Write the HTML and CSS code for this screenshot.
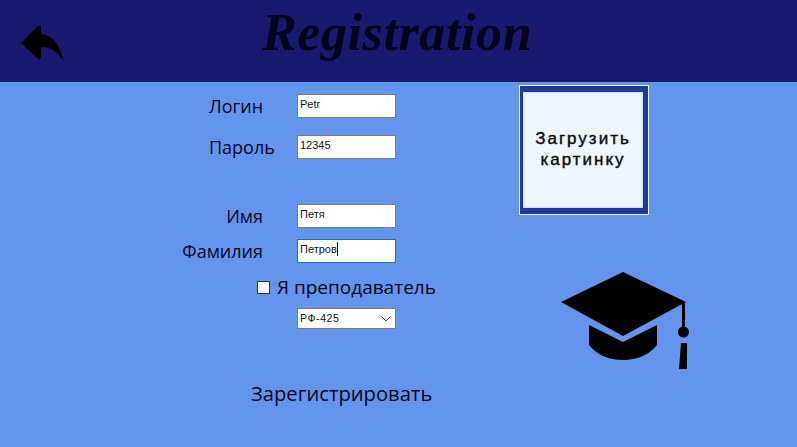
FILE: index.html
```html
<!DOCTYPE html>
<html lang="ru">
<head>
  <meta charset="UTF-8">
  <title>Registration</title>
  <link rel="stylesheet" href="styles.css">
</head>
<body>
  <header class="top-bar">
    <svg class="back-icon" width="44" height="38" viewBox="0 0 44 38">
      <path d="M1 19 L17 3 Q21 0 21 4 L21 10 C34 11 41 24 43.500 37 C37 27 30 23 21 23 L21 33 Q21 37 17 34 Z"/>
    </svg>
    <h1 class="title">Registration</h1>
  </header>

  <main class="content">
    <form class="form">
      <label class="label label-left">Логин</label>
      <div class="field">Petr</div>

      <label class="label label-left row-password">Пароль</label>
      <div class="field row-password">12345</div>

      <label class="label label-right row-name">Имя</label>
      <div class="field row-name">Петя</div>

      <label class="label label-right row-surname">Фамилия</label>
      <div class="field field-focus row-surname">Петров<span class="caret"></span></div>

      <label class="teacher">
        <span class="checkbox"></span>
        Я преподаватель
      </label>

      <div class="field select">
        РФ-425
        <svg width="10" height="6" viewBox="0 0 10 6">
          <path d="M0.500 0.500 L5 5 L9.500 0.500" fill="none" stroke="#555" stroke-width="1"/>
        </svg>
      </div>

      <button type="button" class="submit">Зарегистрировать</button>
    </form>

    <aside class="side">
      <button type="button" class="upload"><span class="upload-inner">Загрузить<br>картинку</span></button>
      <svg class="cap-icon" width="130" height="100" viewBox="0 0 130 100">
        <path d="M62 0 L125 30 L62 64 L0 30 Z"/>
        <path d="M28 53 L62 70 L96 53 L96 73 C88 83 76 88 62 88 C48 88 36 83 28 73 Z"/>
        <rect x="121" y="30" width="3" height="28"/>
        <circle cx="122.500" cy="60" r="5.500"/>
        <path d="M120 71 L126 71 L126 97 L118 97 Z"/>
      </svg>
    </aside>
  </main>
</body>
</html>
```

FILE: styles.css
```css
body {
  margin: 0;
  height: 447px;
  overflow: hidden;
  background: #6495ed;
  color: #05051e;
  font-family: "Open Sans", "Noto Sans", sans-serif;
}

.top-bar {
  display: flex;
  align-items: flex-start;
  height: 82px;
  padding-left: 20px;
  background: #191970;
  box-sizing: border-box;
}

.back-icon {
  margin-top: 24px;
}

.title {
  margin: 0 0 0 198px;
  font-family: "Liberation Serif", serif;
  font-size: 52px;
  line-height: 66px;
  font-style: italic;
  font-weight: bold;
  letter-spacing: 0.6px;
  color: #03031c;
}

.content {
  display: flex;
  padding-left: 182px;
}

.form {
  display: grid;
  grid-template-columns: 115px 99px;
  grid-auto-rows: min-content;
  align-items: center;
  padding-top: 12px;
}

.label {
  font-size: 18px;
  line-height: 22px;
  white-space: nowrap;
}

.label-left {
  padding-left: 27px;
}

.label-right {
  padding-right: 34px;
  text-align: right;
}

.row-password {
  margin-top: 17px;
}

.row-name {
  margin-top: 45px;
}

.row-surname {
  margin-top: 11px;
}

.field {
  height: 24px;
  padding-left: 2px;
  box-sizing: border-box;
  border: 1px solid #7a7a7a;
  background: #fff;
  color: #111;
  font-family: "Liberation Sans", Arial, sans-serif;
  font-size: 11px;
  line-height: 19px;
}

.field-focus {
  border-color: #1f6fb5;
}

.caret {
  display: inline-block;
  width: 1px;
  height: 14px;
  background: #111;
  vertical-align: -3px;
}

.teacher {
  grid-column: 1 / 3;
  display: flex;
  align-items: center;
  gap: 7px;
  margin: 12px 0 0 75px;
  font-size: 19px;
  line-height: 24px;
  white-space: nowrap;
}

.checkbox {
  flex: none;
  width: 11px;
  height: 11px;
  border: 1px solid #333;
  background: #fff;
}

.select {
  grid-column: 2;
  display: flex;
  align-items: center;
  justify-content: space-between;
  height: 21px;
  margin-top: 9px;
  padding-right: 4px;
  font-size: 10.500px;
  letter-spacing: 0.6px;
}

.submit {
  grid-column: 1 / 3;
  justify-self: start;
  margin: 51px 0 0 69px;
  padding: 0;
  border: none;
  background: none;
  color: inherit;
  font-family: inherit;
  font-size: 20.200px;
  line-height: 26px;
  white-space: nowrap;
}

.side {
  display: flex;
  flex-direction: column;
  align-items: flex-start;
  margin-left: 123px;
  padding-top: 3px;
}

.upload {
  width: 130px;
  height: 130px;
  padding: 0;
  box-sizing: border-box;
  border: 1px solid #f2f8ff;
  background: #1f3a9e;
}

.upload-inner {
  display: flex;
  align-items: center;
  justify-content: center;
  height: 114px;
  margin: 6px 5px 6px 3px;
  padding-bottom: 2px;
  background: #eff6ff;
  box-shadow: inset 0 0 3px #b4bacb;
  color: #0a0a0a;
  font-family: "Liberation Sans", Arial, sans-serif;
  font-size: 17px;
  line-height: 21px;
  letter-spacing: 2px;
  -webkit-text-stroke: 0.4px #0a0a0a;
}

.cap-icon {
  margin: 57px 0 0 42px;
}
```
